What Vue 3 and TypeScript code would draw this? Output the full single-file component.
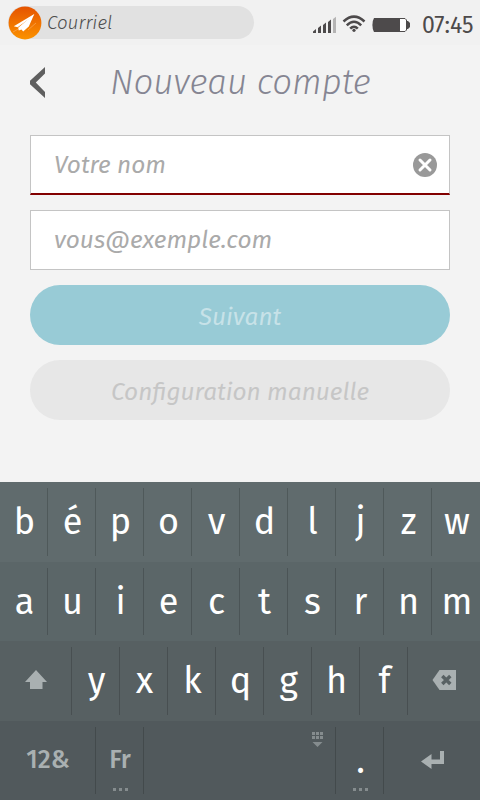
<script setup lang="ts">
import { ref } from 'vue'

interface Key {
  label?: string
  icon?: 'shift' | 'delete' | 'enter' | 'space'
  span: number
  kind?: string
  more?: boolean
}

const name = ref('')
const email = ref('')

const letters = (s: string): Key[] => [...s].map((label) => ({ label, span: 2 }))

const rows: Key[][] = [
  letters('bépovdljzw'),
  letters('auiectsrnm'),
  [{ icon: 'shift', span: 3 }, ...letters('yxkqghf'), { icon: 'delete', span: 3 }],
  [
    { label: '12&', span: 4, kind: 'mode' },
    { label: 'Fr', span: 2, kind: 'mode lang', more: true },
    { icon: 'space', span: 8 },
    { label: '.', span: 2, kind: 'dot', more: true },
    { icon: 'enter', span: 4 },
  ],
]
</script>

<template>
  <main class="phone">
    <header class="status">
      <div class="app-pill">
        <svg class="logo" viewBox="0 0 34 34" width="34" height="34">
          <defs>
            <linearGradient id="orange" x1="0" y1="0" x2="0" y2="1">
              <stop offset="0" stop-color="#e55300" />
              <stop offset="1" stop-color="#fb9200" />
            </linearGradient>
          </defs>
          <circle cx="17" cy="17" r="16.4" fill="url(#orange)" />
          <path d="M5 26L12 22M20 24L28 17" stroke="#fbb066" stroke-width=".6" />
          <path d="M26.3 8L5.8 20.2L9.6 21.2L24.5 10.6Z" fill="#fff" />
          <path d="M26.3 8L10.2 21.8L10.8 24.6L13.4 23.4L15.2 25.4L20.8 20.4Z" fill="#fff" />
        </svg>
        <span class="app-name">Courriel</span>
      </div>
      <div class="indicators">
        <svg class="signal" viewBox="0 0 24 17" width="24" height="17">
          <path d="M0 15.5L3 13V17H0ZM5 12L8 9.5V17H5ZM10 9L13 6.5V17H10ZM15 6L18 3.5V17H15Z" fill="#4d4a4b" />
          <path d="M20 3L23 .8V17H20Z" fill="#b5b4b4" />
        </svg>
        <svg class="wifi" viewBox="0 0 24 18" width="24" height="18">
          <g fill="none" stroke="#4d4a4b" stroke-width="2.5">
            <path d="M1.5 6.5Q12-3.2 22.5 6.5M4.8 10.3Q12 3.2 19.2 10.3M8.2 13.7Q12 9.6 15.8 13.7" />
          </g>
          <circle cx="12" cy="15.3" r="1.6" fill="#4d4a4b" />
        </svg>
        <svg class="battery" viewBox="0 0 38 14" width="38" height="14">
          <path d="M2.5 .5H33L34.5 2V12L33 13.5H2.5Z" fill="#fff" stroke="#4d4a4b" />
          <path d="M2 0H28V14H2Q.4 11.5 .4 7T2 0Z" fill="#4d4a4b" />
          <path d="M34.5 3H36L38 5V9L36 11H34.5Z" fill="#4d4a4b" />
        </svg>
        <time class="clock">07:45</time>
      </div>
    </header>

    <div class="title-bar">
      <svg class="back" viewBox="0 0 16 32" width="16" height="32">
        <path d="M15 0V6.5L5.8 15.5L15 25V31L0 17.3V13.7Z" fill="#5f5f5f" />
      </svg>
      <h1 class="title">Nouveau compte</h1>
    </div>

    <form class="form" @submit.prevent>
      <div class="field invalid">
        <input v-model="name" class="input name" type="text" placeholder="Votre nom" />
        <svg class="clear" viewBox="0 0 24 24" width="24" height="24">
          <circle cx="12" cy="12" r="12" fill="#999" />
          <path d="M7 7L17 17M17 7L7 17" stroke="#fff" stroke-width="3" stroke-linecap="round" />
        </svg>
      </div>
      <div class="field">
        <input v-model="email" class="input mail" type="text" placeholder="vous@exemple.com" />
      </div>
      <button class="action primary" type="submit" disabled>Suivant</button>
      <button class="action secondary" type="button" disabled>Configuration manuelle</button>
    </form>

    <section class="keyboard">
      <div v-for="(row, r) in rows" :key="r" class="row" :class="'row-' + r">
        <div v-for="(key, k) in row" :key="k" class="key" :class="[key.kind, 'span-' + key.span]">
          <span v-if="key.label" class="label">{{ key.label }}</span>
          <svg v-if="key.icon === 'shift'" class="glyph" viewBox="0 0 22 20" width="22" height="20">
            <path d="M11 0L22 12H17.5V19H5V12H0Z" fill="#a9b0b1" />
          </svg>
          <svg v-else-if="key.icon === 'delete'" class="glyph delete" viewBox="0 0 24 20" width="24" height="20">
            <path d="M7.5 0H24V20H7.5L0.5 10Z" fill="#a9b0b1" />
            <path d="M10.3 6L18.3 14M18.3 6L10.3 14" stroke="#586163" stroke-width="3.4" />
          </svg>
          <svg v-else-if="key.icon === 'enter'" class="glyph" viewBox="0 0 24 20" width="24" height="20">
            <path d="M0 11.5L10.5 4V9.5H19V1H23V14H10.5V19Z" fill="#a9b0b1" />
          </svg>
          <svg v-else-if="key.icon === 'space'" class="layout" viewBox="0 0 11 15" width="11" height="15">
            <path d="M0 0h3v3H0zM4 0h3v3H4zM8 0h3v3H8zM0 4h3v3H0zM4 4h3v3H4zM8 4h3v3H8zM.5 10h10L5.5 15z" fill="#858c8e" />
          </svg>
          <svg v-if="key.more" class="more" viewBox="0 0 15 3" width="15" height="3">
            <path d="M0 0h3v3H0zM6 0h3v3H6zM12 0h3v3h-3z" fill="#858c8e" />
          </svg>
        </div>
      </div>
    </section>
  </main>
</template>

<style>
body {
  margin: 0;
}
</style>

<style scoped>
.phone {
  display: flex;
  flex-direction: column;
  width: 480px;
  height: 800px;
  overflow: hidden;
  background: #f3f3f3;
  font-family: "Fira Sans", "Noto Sans", sans-serif;
}
svg {
  display: block;
  flex: none;
}
.status {
  display: flex;
  justify-content: space-between;
  box-sizing: border-box;
  height: 45px;
  padding: 6px 6px 0 8px;
  background: #f1f1f1;
}
.app-pill {
  display: flex;
  align-items: center;
  width: 246px;
  height: 33px;
  border-radius: 17px;
  background: #e1e1e1;
}
.app-name {
  margin-left: 5px;
  color: #4d4d4d;
  font-size: 18.8px;
  font-style: italic;
  font-weight: 300;
  line-height: 32px;
}
.indicators {
  display: flex;
  align-items: flex-start;
}
.signal {
  margin-top: 10px;
}
.wifi {
  margin: 9px 0 0 5px;
}
.battery {
  margin: 12px 0 0 6px;
}
.clock {
  width: 52px;
  margin-left: 12px;
  color: #4d4a4b;
  font-size: 23px;
  line-height: 38px;
  white-space: nowrap;
}
.title-bar {
  display: flex;
  align-items: center;
  height: 75px;
  padding-left: 30px;
}
.back {
  margin-top: 1px;
}
.title {
  margin: 0 0 0 64px;
  color: #858592;
  font-size: 34.9px;
  font-style: italic;
  font-weight: 300;
  line-height: 75px;
  white-space: nowrap;
}
.form {
  display: flex;
  flex: 1;
  flex-direction: column;
  gap: 15px;
  padding: 15px 30px 0;
}
.field {
  display: flex;
  align-items: center;
  box-sizing: border-box;
  height: 60px;
  padding: 0 12px 0 23px;
  border: 1px solid #c4c4c4;
  background: #fff;
}
.invalid {
  border-bottom: 2px solid #820000;
}
.input {
  flex: 1;
  min-width: 0;
  height: 56px;
  padding: 0;
  border: 0;
  outline: 0;
  background: transparent;
  font: italic 400 24.4px "Fira Sans", "Noto Sans", sans-serif;
}
.input.mail {
  padding-bottom: 2px;
  box-sizing: border-box;
}
.input::placeholder {
  color: #aaa;
  opacity: 1;
}
.action {
  height: 60px;
  padding: 2px 0 0;
  border: 0;
  border-radius: 30px;
  font: italic 400 24.4px "Fira Sans", "Noto Sans", sans-serif;
}
.primary {
  background: #98cbd6;
  color: #c7e2e8;
}
.secondary {
  background: #e7e7e7;
  color: #c6c6c6;
}
.keyboard {
  display: grid;
  grid-template-rows: 80px 79px 80px 79px;
  height: 318px;
}
.row {
  display: flex;
  box-sizing: border-box;
  padding: 6px 0;
}
.row-0 {
  background: #606b6d;
}
.row-1 {
  background: #5b6668;
}
.row-2 {
  background: #576062;
}
.row-3 {
  background: #51595c;
}
.key {
  position: relative;
  display: flex;
  align-items: center;
  justify-content: center;
  box-sizing: border-box;
  border-right: 1px solid rgba(0, 0, 0, 0.17);
  color: #fff;
  font-size: 36px;
}
.key:last-child {
  border-right: 0;
}
.span-2 {
  width: 48px;
}
.span-3 {
  width: 72px;
}
.span-4 {
  width: 96px;
}
.span-8 {
  width: 192px;
  align-items: flex-start;
}
.label {
  padding-left: 2px;
  line-height: 68px;
}
.glyph {
  margin: 0 0 2px 1px;
}
.glyph.delete {
  margin-left: 0;
}
.mode {
  color: #a9b0b1;
  font-size: 25.5px;
  font-weight: 500;
}
.mode .label {
  padding: 0 0 1px 1px;
}
.layout {
  margin: 5px 0 0 156px;
}
.more {
  position: absolute;
  bottom: 3px;
  left: 17px;
}
</style>
